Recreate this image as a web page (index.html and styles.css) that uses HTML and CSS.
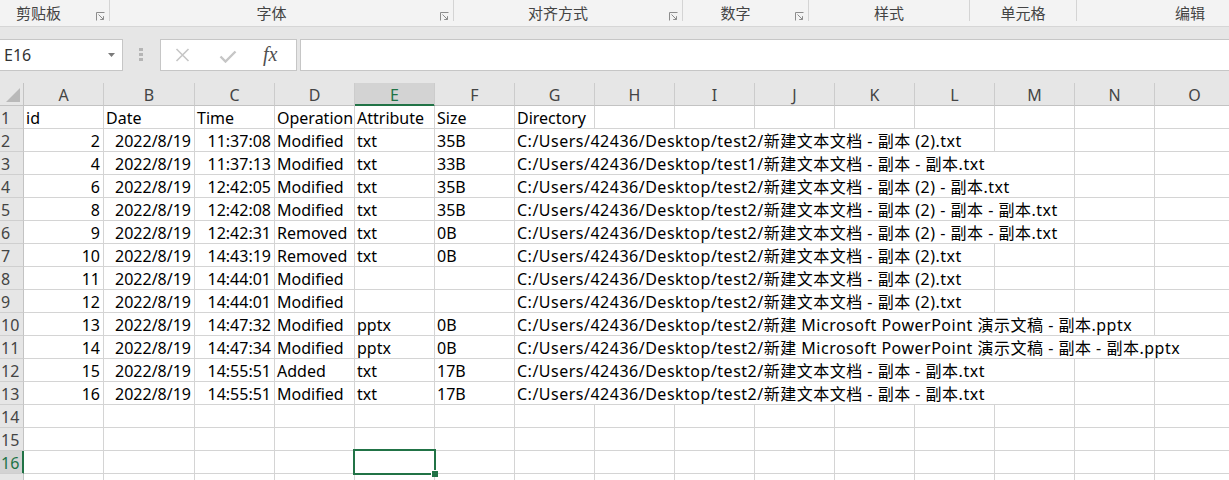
FILE: index.html
```html
<!DOCTYPE html>
<html lang="zh">
<head>
<meta charset="utf-8">
<title>Excel</title>
<link rel="stylesheet" href="styles.css">
</head>
<body>
<div class="ribbon">
  <div class="group w-clip"><span class="label pad-clip">剪贴板</span><span class="launcher"><svg width="9" height="9" viewBox="0 0 9 9"><path d="M0.5 8.5V0.5H8.5" fill="none" stroke="#8c8c8c"/><path d="M2.5 2.5L7.5 7.5M7.5 4.2V7.5H4.2" fill="none" stroke="#8c8c8c"/></svg></span></div>
  <div class="sep"></div>
  <div class="group w-font"><span class="label">字体</span><span class="launcher"><svg width="9" height="9" viewBox="0 0 9 9"><path d="M0.5 8.5V0.5H8.5" fill="none" stroke="#8c8c8c"/><path d="M2.5 2.5L7.5 7.5M7.5 4.2V7.5H4.2" fill="none" stroke="#8c8c8c"/></svg></span></div>
  <div class="sep"></div>
  <div class="group w-align"><span class="label">对齐方式</span><span class="launcher"><svg width="9" height="9" viewBox="0 0 9 9"><path d="M0.5 8.5V0.5H8.5" fill="none" stroke="#8c8c8c"/><path d="M2.5 2.5L7.5 7.5M7.5 4.2V7.5H4.2" fill="none" stroke="#8c8c8c"/></svg></span></div>
  <div class="sep"></div>
  <div class="group w-num"><span class="label">数字</span><span class="launcher"><svg width="9" height="9" viewBox="0 0 9 9"><path d="M0.5 8.5V0.5H8.5" fill="none" stroke="#8c8c8c"/><path d="M2.5 2.5L7.5 7.5M7.5 4.2V7.5H4.2" fill="none" stroke="#8c8c8c"/></svg></span></div>
  <div class="sep"></div>
  <div class="group w-style"><span class="label">样式</span></div>
  <div class="sep"></div>
  <div class="group w-cell"><span class="label">单元格</span></div>
  <div class="sep"></div>
  <div class="group w-edit"><span class="label">编辑</span></div>
</div>

<div class="fbar">
  <div class="namebox"><span>E16</span><svg width="7" height="4" viewBox="0 0 7 4"><path d="M0 0H7L3.5 4Z" fill="#7a7a7a"/></svg></div>
  <div class="grip"><i></i><i></i><i></i></div>
  <div class="fxbox">
    <svg class="ic-x" width="15" height="14" viewBox="0 0 15 14"><path d="M1.5 1L13.5 13M13.5 1L1.5 13" stroke="#c6c6c6" stroke-width="1.6" fill="none"/></svg>
    <svg class="ic-ok" width="18" height="13" viewBox="0 0 18 13"><path d="M1.5 6.5L6.5 11.5L16.5 1.5" stroke="#c6c6c6" stroke-width="2.4" fill="none"/></svg>
    <span class="fx">fx</span>
  </div>
  <div class="formula"></div>
</div>

<div class="sheet">
  <div class="row hdr">
    <div class="c corner"><svg width="23" height="22" viewBox="0 0 23 22"><path d="M20 5V19H6Z" fill="#b9b9b9"/></svg></div>
    <div class="c">A</div><div class="c">B</div><div class="c">C</div><div class="c">D</div><div class="c on">E</div><div class="c">F</div><div class="c">G</div><div class="c">H</div><div class="c">I</div><div class="c">J</div><div class="c">K</div><div class="c">L</div><div class="c">M</div><div class="c">N</div><div class="c">O</div>
  </div>

  <div class="row"><div class="c rh">1</div><div class="c">id</div><div class="c">Date</div><div class="c">Time</div><div class="c">Operation</div><div class="c">Attribute</div><div class="c">Size</div><div class="c">Directory</div><div class="c"></div><div class="c"></div><div class="c"></div><div class="c"></div><div class="c"></div><div class="c"></div><div class="c"></div><div class="c"></div></div>

  <div class="row"><div class="c rh">2</div><div class="c r">2</div><div class="c r">2022/8/19</div><div class="c r">11:37:08</div><div class="c">Modified</div><div class="c">txt</div><div class="c">35B</div><div class="c dir s6">C:/Users/42436/Desktop/test2/新建文本文档 - 副本 (2).txt</div><div class="c"></div><div class="c"></div><div class="c"></div></div>

  <div class="row"><div class="c rh">3</div><div class="c r">4</div><div class="c r">2022/8/19</div><div class="c r">11:37:13</div><div class="c">Modified</div><div class="c">txt</div><div class="c">33B</div><div class="c dir s7">C:/Users/42436/Desktop/test1/新建文本文档 - 副本 - 副本.txt</div><div class="c"></div><div class="c"></div></div>

  <div class="row"><div class="c rh">4</div><div class="c r">6</div><div class="c r">2022/8/19</div><div class="c r">12:42:05</div><div class="c">Modified</div><div class="c">txt</div><div class="c">35B</div><div class="c dir s7">C:/Users/42436/Desktop/test2/新建文本文档 - 副本 (2) - 副本.txt</div><div class="c"></div><div class="c"></div></div>

  <div class="row"><div class="c rh">5</div><div class="c r">8</div><div class="c r">2022/8/19</div><div class="c r">12:42:08</div><div class="c">Modified</div><div class="c">txt</div><div class="c">35B</div><div class="c dir s7">C:/Users/42436/Desktop/test2/新建文本文档 - 副本 (2) - 副本 - 副本.txt</div><div class="c"></div><div class="c"></div></div>

  <div class="row"><div class="c rh">6</div><div class="c r">9</div><div class="c r">2022/8/19</div><div class="c r">12:42:31</div><div class="c">Removed</div><div class="c">txt</div><div class="c">0B</div><div class="c dir s7">C:/Users/42436/Desktop/test2/新建文本文档 - 副本 (2) - 副本 - 副本.txt</div><div class="c"></div><div class="c"></div></div>

  <div class="row"><div class="c rh">7</div><div class="c r">10</div><div class="c r">2022/8/19</div><div class="c r">14:43:19</div><div class="c">Removed</div><div class="c">txt</div><div class="c">0B</div><div class="c dir s6">C:/Users/42436/Desktop/test2/新建文本文档 - 副本 (2).txt</div><div class="c"></div><div class="c"></div><div class="c"></div></div>

  <div class="row"><div class="c rh">8</div><div class="c r">11</div><div class="c r">2022/8/19</div><div class="c r">14:44:01</div><div class="c">Modified</div><div class="c"></div><div class="c"></div><div class="c dir s6">C:/Users/42436/Desktop/test2/新建文本文档 - 副本 (2).txt</div><div class="c"></div><div class="c"></div><div class="c"></div></div>

  <div class="row"><div class="c rh">9</div><div class="c r">12</div><div class="c r">2022/8/19</div><div class="c r">14:44:01</div><div class="c">Modified</div><div class="c"></div><div class="c"></div><div class="c dir s6">C:/Users/42436/Desktop/test2/新建文本文档 - 副本 (2).txt</div><div class="c"></div><div class="c"></div><div class="c"></div></div>

  <div class="row"><div class="c rh">10</div><div class="c r">13</div><div class="c r">2022/8/19</div><div class="c r">14:47:32</div><div class="c">Modified</div><div class="c">pptx</div><div class="c">0B</div><div class="c dir s8">C:/Users/42436/Desktop/test2/新建 Microsoft PowerPoint 演示文稿 - 副本.pptx</div><div class="c"></div></div>

  <div class="row"><div class="c rh">11</div><div class="c r">14</div><div class="c r">2022/8/19</div><div class="c r">14:47:34</div><div class="c">Modified</div><div class="c">pptx</div><div class="c">0B</div><div class="c dir s9">C:/Users/42436/Desktop/test2/新建 Microsoft PowerPoint 演示文稿 - 副本 - 副本.pptx</div></div>

  <div class="row"><div class="c rh">12</div><div class="c r">15</div><div class="c r">2022/8/19</div><div class="c r">14:55:51</div><div class="c">Added</div><div class="c">txt</div><div class="c">17B</div><div class="c dir s7">C:/Users/42436/Desktop/test2/新建文本文档 - 副本 - 副本.txt</div><div class="c"></div><div class="c"></div></div>

  <div class="row"><div class="c rh">13</div><div class="c r">16</div><div class="c r">2022/8/19</div><div class="c r">14:55:51</div><div class="c">Modified</div><div class="c">txt</div><div class="c">17B</div><div class="c dir s7">C:/Users/42436/Desktop/test2/新建文本文档 - 副本 - 副本.txt</div><div class="c"></div><div class="c"></div></div>

  <div class="row"><div class="c rh">14</div><div class="c"></div><div class="c"></div><div class="c"></div><div class="c"></div><div class="c"></div><div class="c"></div><div class="c"></div><div class="c"></div><div class="c"></div><div class="c"></div><div class="c"></div><div class="c"></div><div class="c"></div><div class="c"></div><div class="c"></div></div>

  <div class="row"><div class="c rh">15</div><div class="c"></div><div class="c"></div><div class="c"></div><div class="c"></div><div class="c"></div><div class="c"></div><div class="c"></div><div class="c"></div><div class="c"></div><div class="c"></div><div class="c"></div><div class="c"></div><div class="c"></div><div class="c"></div><div class="c"></div></div>

  <div class="row"><div class="c rh on">16</div><div class="c"></div><div class="c"></div><div class="c"></div><div class="c"></div><div class="c"></div><div class="c"></div><div class="c"></div><div class="c"></div><div class="c"></div><div class="c"></div><div class="c"></div><div class="c"></div><div class="c"></div><div class="c"></div><div class="c"></div></div>

  <div class="row"><div class="c rh"></div><div class="c"></div><div class="c"></div><div class="c"></div><div class="c"></div><div class="c"></div><div class="c"></div><div class="c"></div><div class="c"></div><div class="c"></div><div class="c"></div><div class="c"></div><div class="c"></div><div class="c"></div><div class="c"></div><div class="c"></div></div>

  <div class="selection"><span class="handle"></span></div>
</div>
</body>
</html>
```

FILE: styles.css
```css
* { box-sizing: border-box; }

html, body {
  margin: 0;
  padding: 0;
}

body {
  width: 1229px;
  height: 480px;
  overflow: hidden;
  background: #ffffff;
  font-family: "Noto Sans", "Noto Sans CJK SC", sans-serif;
}

/* ---------- ribbon group labels ---------- */
.ribbon {
  display: flex;
  height: 27px;
  background: #f3f3f3;
  border-bottom: 1px solid #d6d6d6;
  overflow: hidden;
}

.group {
  display: flex;
  flex: none;
}

.w-clip { width: 109px; }
.w-font { width: 343px; }
.w-align { width: 228px; }
.w-num { width: 125px; }
.w-style { width: 160px; }
.w-cell { width: 106px; }
.w-edit { width: 226px; }

.label {
  flex: 1;
  text-align: center;
  font-family: "Noto Sans CJK SC", sans-serif;
  font-size: 15px;
  line-height: 20px;
  padding-top: 3px;
  color: #444444;
  white-space: nowrap;
}

.pad-clip { padding-right: 12px; }

.launcher {
  width: 20px;
  flex: none;
  display: flex;
  justify-content: flex-end;
  align-items: flex-start;
  padding-top: 12px;
  padding-right: 4px;
}

.launcher svg { display: block; }

.sep {
  width: 1px;
  height: 21px;
  flex: none;
  background: #d4d4d4;
}

/* ---------- formula bar ---------- */
.fbar {
  display: flex;
  align-items: flex-start;
  height: 56px;
  padding-top: 12px;
  background: #e6e6e6;
}

.namebox {
  flex: none;
  width: 124px;
  height: 32px;
  margin-left: -1px;
  background: #ffffff;
  border: 1px solid #c6c6c6;
  display: flex;
  align-items: center;
  justify-content: space-between;
  padding: 0 7px 0 4px;
  font-size: 16px;
  color: #333333;
}

.namebox svg { display: block; }

.grip {
  flex: none;
  margin-left: 16px;
  padding-top: 9px;
  display: flex;
  flex-direction: column;
  gap: 2px;
}

.grip i {
  display: block;
  width: 4px;
  height: 3px;
  background: #b5b5b5;
}

.fxbox {
  flex: none;
  width: 137px;
  height: 32px;
  margin-left: 17px;
  background: #ffffff;
  border: 1px solid #c6c6c6;
  display: flex;
  align-items: center;
}

.ic-x { display: block; margin-left: 14px; }
.ic-ok { display: block; margin-left: 29px; margin-top: 2px; }

.fx {
  margin-left: 26px;
  font-family: "Liberation Serif", serif;
  font-style: italic;
  font-size: 20px;
  line-height: 20px;
  color: #505050;
  margin-top: -2px;
}

.formula {
  flex: 1;
  height: 32px;
  margin-left: 3px;
  margin-right: -1px;
  background: #ffffff;
  border: 1px solid #c6c6c6;
}

/* ---------- sheet ---------- */
.sheet {
  position: relative;
}

.row {
  display: grid;
  grid-template-columns: 24px 80px 91px repeat(13, 80px);
  height: 23px;
}

.c {
  height: 23px;
  border-right: 1px solid #d4d4d4;
  border-bottom: 1px solid #d4d4d4;
  padding: 0 3px 0 2px;
  font-size: 16px;
  line-height: 24px;
  white-space: nowrap;
  overflow: hidden;
  color: #000000;
}

.r { text-align: right; }

.dir {
  overflow: visible;
  letter-spacing: 0.5px;
}
.s6 { grid-column: span 6; }
.s7 { grid-column: span 7; }
.s8 { grid-column: span 8; }
.s9 { grid-column: span 9; }

.hdr .c {
  background: #e6e6e6;
  text-align: center;
  color: #444444;
  border-right-color: #cccccc;
  border-bottom-color: #c3c3c3;
  padding: 0;
}

.hdr .c.on {
  background: #d3d3d3;
  color: #217346;
  border-bottom-color: #217346;
  box-shadow: inset 0 -1px 0 #217346;
}

.hdr .corner {
  padding: 0;
  border-right-color: #c3c3c3;
}

.corner svg { display: block; }

.rh {
  background: #e6e6e6;
  color: #444444;
  border-right-color: #c3c3c3;
  border-bottom-color: #cfcfcf;
  padding: 0 0 0 1px;
}

.rh.on {
  background: #d3d3d3;
  color: #217346;
  border-right-color: #217346;
  box-shadow: inset -1px 0 0 #217346;
}

.selection {
  position: absolute;
  left: 353px;
  top: 366px;
  width: 83px;
  height: 26px;
  border: 2px solid #217346;
}

.handle {
  position: absolute;
  right: -4px;
  bottom: -4px;
  width: 7px;
  height: 7px;
  background: #217346;
  border-top: 1px solid #ffffff;
  border-left: 1px solid #ffffff;
}
```
